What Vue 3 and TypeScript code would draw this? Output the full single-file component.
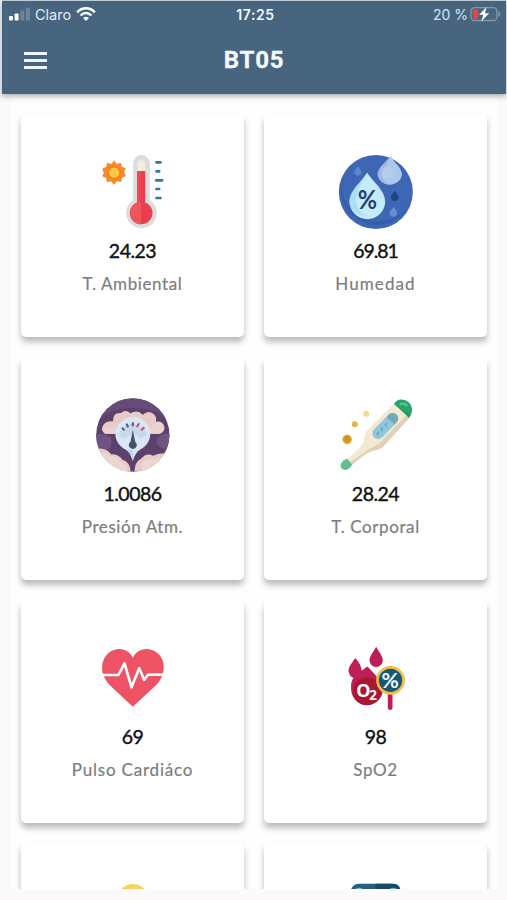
<script setup lang="ts">
interface Reading {
  id: string
  value: string
  label: string
  viewBox: string
}

const readings: Reading[] = [
  { id: 'ambient', value: '24.23', label: 'T. Ambiental', viewBox: '1.5 0 300 300' },
  { id: 'humidity', value: '69.81', label: 'Humedad', viewBox: '1.5 0 300 300' },
  { id: 'pressure', value: '1.0086', label: 'Presión Atm.', viewBox: '1.5 -6 300 300' },
  { id: 'body', value: '28.24', label: 'T. Corporal', viewBox: '1.5 -6 300 300' },
  { id: 'pulse', value: '69', label: 'Pulso Cardiáco', viewBox: '1.5 -12 300 300' },
  { id: 'oxygen', value: '98', label: 'SpO2', viewBox: '1.5 -12 300 300' },
  { id: 'light', value: '', label: '', viewBox: '1.5 0 300 300' },
  { id: 'device', value: '', label: '', viewBox: '1.5 0 300 300' },
]
</script>

<template>
  <div class="screen">
    <header class="header">
      <div class="status">
        <div class="carrier">
          <svg class="signal" viewBox="0 0 22 14">
            <rect x="0" y="9" width="4" height="4.5" rx="1" fill="#fff" />
            <rect x="5.6" y="6.5" width="4" height="7" rx="1" fill="#fff" />
            <rect x="11.3" y="3.5" width="4" height="10" rx="1" fill="#6c859b" />
            <rect x="17" y="0.8" width="4" height="12.7" rx="1" fill="#6c859b" />
          </svg>
          <span class="carrier-name">Claro</span>
          <svg class="wifi" viewBox="0 0 20 14" fill="none" stroke="#fff" stroke-width="2.5">
            <path d="M1.2 5.3C6-.1 14-.1 18.8 5.3" />
            <path d="M4.6 8.5C7.7 5.2 12.3 5.2 15.4 8.5" />
            <path d="M7.1 11.1Q10 8.4 12.9 11.1L10 14Z" fill="#fff" stroke="none" />
          </svg>
        </div>
        <span class="time">17:25</span>
        <div class="power">
          <span>20 %</span>
          <svg class="battery" viewBox="0 0 32 16">
            <rect x="1" y="1.7" width="26" height="12.8" rx="3.5" fill="none" stroke="#8199ac" stroke-width="1.3" />
            <path d="M29 5.7Q30.8 8 29 10.3Z" fill="#8199ac" stroke="#8199ac" />
            <rect x="2.8" y="3.5" width="5.5" height="9.2" rx="1.6" fill="#e9473c" />
            <path d="M16.5 1L9.2 8.8H13.3L11.2 15.4L19.2 7.2H15Z" fill="#fff" />
          </svg>
        </div>
      </div>
      <div class="toolbar">
        <button class="menu" aria-label="Menú">
          <span class="line"></span>
          <span class="line"></span>
          <span class="line"></span>
        </button>
        <h1 class="title">BT05</h1>
      </div>
    </header>

    <main class="content">
      <article v-for="r in readings" :key="r.id" class="card">
        <svg class="icon" :viewBox="r.viewBox">
          <g v-if="r.id === 'ambient'">
            <path d="M95 61L102 72L115 68L118 80L130 84L125 97L130 108L119 113L116 126L103 124L95 134L86 124L73 127L71 114L59 109L64 98L59 86L71 81L74 68L87 72Z" fill="#f38b2b" />
            <circle cx="95" cy="98" r="20" fill="#f67d28" />
            <circle cx="95" cy="98" r="15.5" fill="#fcc83c" />
            <path d="M152 70a25 25 0 0 1 50 0V180a46 46 0 1 1-50 0Z" fill="#dcdddb" />
            <path d="M164 72a12 12 0 0 1 24 0V100H164Z" fill="#f2eddc" />
            <path d="M164 93H188V187H164Z" fill="#e93d50" />
            <circle cx="176" cy="219" r="34" fill="#e93d50" />
            <path d="M176 185V253a34 34 0 0 1-33-34q0-26 33-34Z" fill="#f0555b" />
            <path d="M164 93H175V191H164Z" fill="#f0485a" />
            <path d="M222 67H234M222 94H230M221 121H239M222 147H230M222 174H234" stroke="#28799b" stroke-width="8" stroke-linecap="round" />
          </g>

          <g v-else-if="r.id === 'humidity'">
            <circle cx="151" cy="156" r="111" fill="#3d67b4" />
            <path d="M48 120a109 109 0 0 0 205 71a111 111 0 0 1-205-71Z" fill="#345dab" />
            <path d="M97 78Q83 94 87 102Q97 112 107 102Q111 94 97 78Z" fill="#5c88cb" />
            <path d="M194 48C182 67 156 83 156 104a37 37 0 0 0 73 0C229 83 204 67 194 48Z" fill="#9db9e2" />
            <path d="M194 48C190 70 170 85 170 110q4 18 24 22q31-2 35-28C229 83 204 67 194 48Z" fill="#adc7e8" />
            <circle cx="185" cy="98" r="18" fill="#bdd0ec" opacity=".6" />
            <path d="M125 98C109 125 72 151 72 184a53 53 0 0 0 107 0C179 151 142 125 125 98Z" fill="#c4ebf9" />
            <path d="M125 98C112 123 92 151 92 182q2 35 33 47q-49-3-53-45C72 151 109 125 125 98Z" fill="#a9dff3" />
            <text class="glyph" x="126" y="208" font-size="80" textLength="58" lengthAdjust="spacingAndGlyphs" fill="#273e72">%</text>
            <path d="M208 153Q192 169 196 177Q207 190 218 177Q223 169 208 153Z" fill="#214387" />
            <path d="M205 202Q188 217 193 224Q204 237 214 224Q219 216 205 202Z" fill="#648ed0" />
          </g>

          <g v-else-if="r.id === 'pressure'">
            <clipPath id="pressure-disc"><circle cx="151" cy="150" r="110" /></clipPath>
            <g clip-path="url(#pressure-disc)">
              <path d="M40 40H262V261H40Z" fill="#5c416d" />
              <path d="M40 130V30H262V130Q250 72 151 69Q52 72 40 130Z" fill="#664a77" />
              <path d="M40 147Q79 145 85 160Q91 185 76 194H40ZM262 145Q223 147 222 171Q224 192 262 193Z" fill="#705381" />
              <path d="M68 146Q52 137 63 119Q72 107 92 109Q90 82 116 84Q128 72 144 85Q165 73 181 89Q198 73 214 88Q224 96 220 110Q242 107 246 127Q247 140 232 147Z" fill="#e7cbc9" />
              <path d="M66 130Q100 121 110 146H68Q60 142 66 130ZM220 112Q204 116 200 144H232Q246 139 244 127Q237 108 220 112Z" fill="#ecd3ce" />
              <path d="M37 190Q72 187 86 208Q107 207 120 224Q145 231 144 265H40ZM156 265Q155 231 175 222Q192 202 211 212Q235 200 265 207V265Z" fill="#e7cbc9" />
              <path d="M48 205Q75 196 83 214Q108 213 115 232Q130 236 137 255L100 265ZM178 235Q194 217 213 224Q229 215 245 220V265H180Z" fill="#ecd6d0" />
            </g>
            <path d="M151 96a51 51 0 0 0-21 98q14 9 21 34q7-25 21-34a51 51 0 0 0-21-98Z" fill="#d8e6f7" />
            <path d="M108 155a43 43 0 0 1 85-4L172 161a23 23 0 0 0-42 0Z" fill="#c8d8ea" />
            <path d="M132 193Q143 203 151 228V196Z" fill="#c1d5ea" />
            <path d="M118 128L126 136M132 116L137 127M151 112V124" stroke="#4d5f79" stroke-width="6" />
            <path d="M170 115L163 126M186 127L176 136" stroke="#db437c" stroke-width="6" />
            <path d="M151 134L158 170A12 12 0 1 1 144 170Z" fill="#47536b" />
          </g>

          <g v-else-if="r.id === 'body'">
            <circle cx="65" cy="163" r="14" fill="#dca126" />
            <circle cx="64" cy="162" r="8" fill="#cc941c" />
            <circle cx="88" cy="118" r="9" fill="#e3b443" />
            <circle cx="122" cy="86" r="9" fill="#f6d991" />
            <path d="M205 57L124 137Q117 147 115 171Q111 182 67 221L80 239Q126 199 145 197Q162 194 172 186L252 98Z" fill="#f3e9d2" />
            <path d="M252 98L243 91L162 175Q139 190 130 193L76 230L80 239Q126 199 145 197Q162 194 172 186Z" fill="#dfd0b6" />
            <path d="M205 57C217 38 237 42 251 53C265 67 260 89 250 98Q238 80 205 57Z" fill="#27a669" />
            <path d="M209 60Q234 82 250 98L255 89Q239 83 215 61Z" fill="#1b9b5e" />
            <path d="M224 59Q235 52 244 62" fill="none" stroke="#6ac797" stroke-width="5" stroke-linecap="round" />
            <path d="M65 221C48 227 42 239 47 249C57 261 74 253 80 238Z" fill="#62bd92" />
            <path d="M158 145L201 101" stroke="#8fc7dc" stroke-width="34" stroke-linecap="round" />
            <path d="M184 98Q188 84 203 84Q219 87 218 103L208 118Z" fill="#75a8bd" />
            <path d="M151 147L159 143L157 154M164 133L171 128L169 139M175 120L184 116L182 127" fill="none" stroke="#6fadc6" stroke-width="4" />
          </g>

          <g v-else-if="r.id === 'pulse'">
            <path d="M151 230L82 166C59 143 53 113 64 88C83 50 131 46 151 83C171 46 220 50 239 88C250 113 242 144 222 164Z" fill="#ed5265" />
            <path d="M42 135H108L126 100L147 172L170 115L185 149L197 134H260" fill="none" stroke="#fff" stroke-width="8" stroke-linejoin="round" />
          </g>

          <g v-else-if="r.id === 'oxygen'">
            <path d="M152 50C143 67 132 78 132 91a20 20 0 0 0 40 0C172 78 161 67 152 50Z" fill="#bc1e57" />
            <path d="M89 84C78 102 69 110 69 123Q72 140 84 144Q75 153 77 181A48 48 0 0 0 171 190L153 139Q128 108 124 110L109 122Q106 101 89 84Z" fill="#bd1f57" />
            <circle cx="124" cy="184" r="42" fill="#aa1732" />
            <text class="formula" x="92" y="202" font-size="54" fill="#fff">O<tspan dy="7" font-size="40">2</tspan></text>
            <path d="M187 192H201V232Q201 240 194 240Q187 240 187 232Z" fill="#c01d57" />
            <circle cx="195" cy="151" r="39" fill="#175777" stroke="#f3bd42" stroke-width="8" />
            <text class="glyph" x="194" y="174" font-size="64" textLength="52" lengthAdjust="spacingAndGlyphs" fill="#f4faff">%</text>
          </g>

          <circle v-else-if="r.id === 'light'" cx="151" cy="171" r="48" fill="#f4d45e" />

          <g v-else>
            <rect x="76" y="122" width="149" height="150" rx="24" fill="#285f7d" />
            <path d="M150 122H201Q225 122 225 146V272H150Z" fill="#184963" />
            <path d="M92 140Q101 133 110 140M194 140Q203 133 212 140" stroke="#65c6d0" stroke-width="5" fill="none" />
          </g>
        </svg>
        <div class="value" :class="r.id">{{ r.value }}</div>
        <div class="label" :class="r.id">{{ r.label }}</div>
      </article>
    </main>
  </div>
</template>

<style>
body {
  background: #fbf9fa;
}
</style>

<style scoped>
.screen {
  box-sizing: border-box;
  display: flex;
  flex-direction: column;
  width: 507px;
  height: 900px;
  padding: 0 1px 11px 2px;
  overflow: hidden;
  font-family: Lato, "Open Sans", sans-serif;
}

.header {
  z-index: 1;
  box-sizing: border-box;
  flex: none;
  height: 94px;
  border-top: 1px solid #bdcbd6;
  background: #48657f;
  box-shadow: 0 2px 6px rgba(0, 0, 0, 0.35);
  color: #f5f9fe;
}

.status {
  display: grid;
  grid-template-columns: 1fr auto 1fr;
  align-items: center;
  height: 26px;
  padding: 0 4px 0 7px;
  font-family: Inter, sans-serif;
  font-size: 14px;
}

.carrier,
.power {
  display: flex;
  align-items: center;
}

.carrier-name {
  margin: 0 5px 0 4px;
  font-size: 14.5px;
  color: #e0ebf4;
}

.signal {
  width: 22px;
  height: 14px;
}

.wifi {
  width: 20px;
  height: 14px;
}

.time {
  font-weight: 600;
  letter-spacing: 0.6px;
}

.power {
  justify-content: flex-end;
  gap: 2px;
  color: #d7e3ed;
}

.battery {
  width: 32px;
  height: 16px;
}

.toolbar {
  display: grid;
  grid-template-columns: 60px 1fr 60px;
  align-items: center;
  height: 66px;
}

.menu {
  display: flex;
  flex-direction: column;
  gap: 4px;
  margin-left: 22px;
  padding: 0;
  border: 0;
  background: none;
}

.line {
  width: 23px;
  height: 3px;
  border-radius: 0.5px;
  background: #eef6fd;
}

.title {
  margin: 0;
  font: 700 24px/30px Roboto, sans-serif;
  letter-spacing: 0.8px;
  text-align: center;
  -webkit-text-stroke: 0.3px #f5f9fe;
}

.content {
  display: grid;
  flex: 1;
  grid-template-columns: 223px 223px;
  grid-auto-rows: 223px;
  gap: 20px;
  min-height: 0;
  margin: 0 9px;
  padding: 20px 10px 0;
  overflow: hidden;
  background: #fefefe;
}

.card {
  display: flex;
  flex-direction: column;
  align-items: center;
  border-radius: 5px;
  background: #fff;
  box-shadow: 0 5px 6px rgba(0, 0, 0, 0.27);
}

.icon {
  flex: none;
  width: 100px;
  height: 100px;
  margin-top: 26px;
}

.card:nth-child(n + 7) .icon {
  margin-top: 0;
}

.glyph,
.formula {
  font-family: Lato, sans-serif;
  font-weight: 700;
}

.glyph {
  text-anchor: middle;
}

.formula {
  font-family: "Open Sans", sans-serif;
  letter-spacing: -4px;
}

.value {
  height: 24px;
  margin-top: -1px;
  font-size: 19.5px;
  line-height: 24px;
  letter-spacing: -0.5px;
  color: #111;
  -webkit-text-stroke: 0.4px #111;
}

.value.humidity {
  letter-spacing: -1.1px;
}

.label {
  height: 22px;
  margin-top: 10px;
  font-size: 17px;
  line-height: 22px;
  letter-spacing: 0.6px;
  color: #7d7d7d;
  -webkit-text-stroke: 0.2px #7d7d7d;
}

.label.humidity {
  letter-spacing: 1.1px;
}

.label.pulse {
  letter-spacing: 0.8px;
}
</style>
